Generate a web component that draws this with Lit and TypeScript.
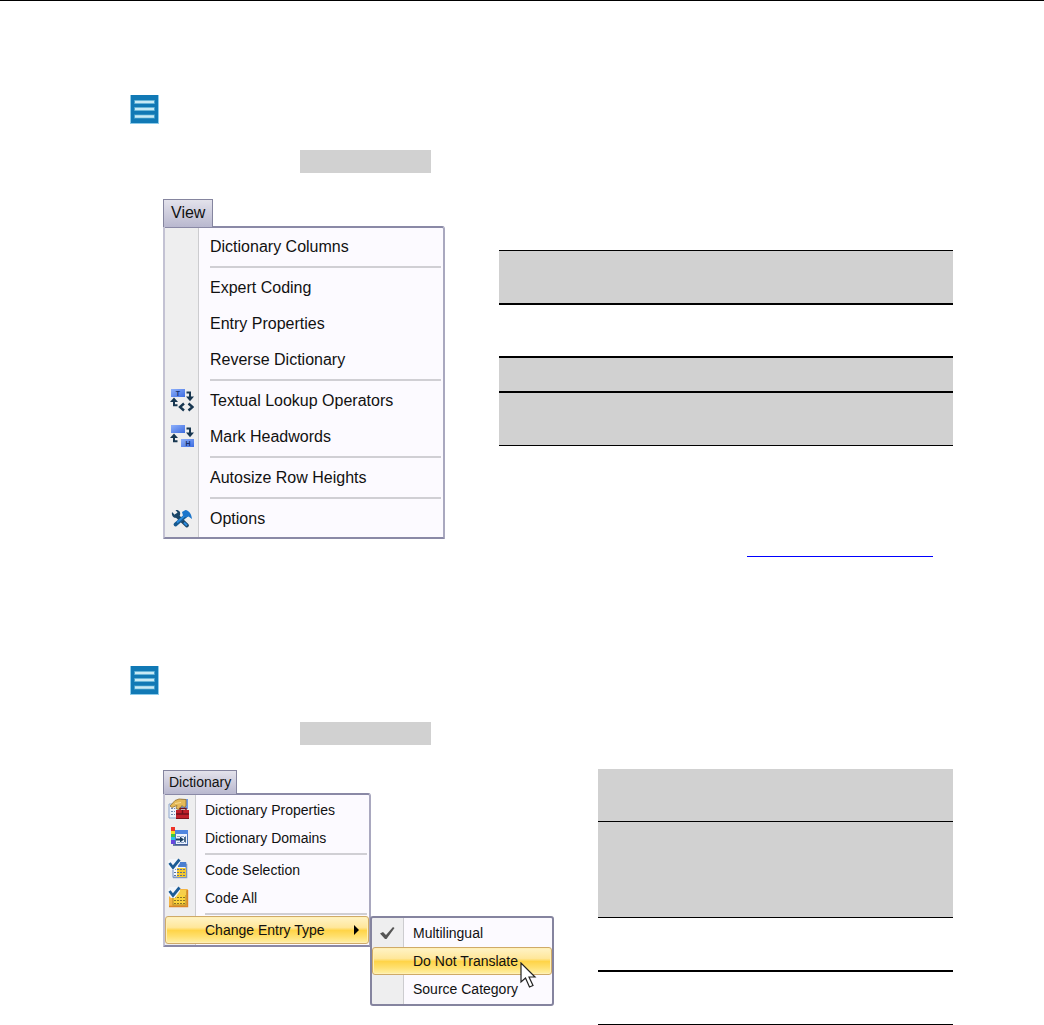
import { LitElement, html, css, svg, nothing, TemplateResult } from "lit";
import { customElement, property } from "lit/decorators.js";

type Entry = { label: string; icon?: string; active?: boolean; submenu?: boolean } | null;

const arrows = svg`
  <path d="M16.5 3.5H20V8" fill="none" stroke="#173650" stroke-width="2"/>
  <path d="M16 7.5H24L20 12.3Z" fill="#173650"/>
  <path d="M7.5 16.3H4V12" fill="none" stroke="#173650" stroke-width="2"/>
  <path d="M0 13H8L4 8.4Z" fill="#173650"/>`;

const blue = svg`
  <defs><linearGradient id="blue" x2="1" y2="1"><stop stop-color="#8eb0fb"/><stop offset="1" stop-color="#3d6ce0"/></linearGradient></defs>
  <rect x="1" y="0" width="14" height="8" fill="url(#blue)"/>`;

const sheet = (selected: boolean) => svg`
  ${selected
    ? svg`<rect x="1" y="3" width="19" height="18" rx="1" fill="#f4b545"/><path d="M1 20.5H19.5V4" fill="none" stroke="#dc8626" stroke-width="1.4"/>`
    : svg`<path d="M5 19.5H18.5V6" fill="none" stroke="#8fa0bd" stroke-width="1.6"/>`}
  <rect x="5" y="5" width="13" height="14" fill="${selected ? "#fbd43c" : "#f4f7fc"}" stroke="${selected ? "#b98b2a" : "#6f90c6"}"/>
  <rect x="10" y="4" width="8" height="5" fill="${selected ? "#f7cf4a" : "#4b7fd0"}"/>
  ${selected ? nothing : svg`<rect x="9" y="10" width="9" height="9" fill="#f5c92e"/>`}
  <path d="M6 11.5H17M6 14.5H17M6 17.5H17" stroke="${selected ? "#8a7428" : "#5d7394"}" stroke-dasharray="2 1"/>
  <path d="M2 1H12V5L7 12H3L0 9V3Z" fill="#f3f6fb"/>
  <path d="M1.5 5L5 9.5L11.5 1.5" fill="none" stroke="#1c5c96" stroke-width="2.8"/>`;

const icons: Record<string, TemplateResult<2>> = {
  lookup: svg`
    ${blue}
    <text class="glyph" x="8" y="7" text-anchor="middle">T</text>
    ${arrows}
    <path d="M14 14.5L10 18L14 21.5M18.5 14.5L22.5 18L18.5 21.5" fill="none" stroke="#173650" stroke-width="2.4"/>`,
  headword: svg`
    ${blue}
    ${arrows}
    <rect x="11" y="14" width="13" height="8" fill="url(#blue)"/>
    <text class="glyph" x="18" y="21" text-anchor="middle">H</text>`,
  tools: svg`
    <path d="M6.5 8.5L17 18.5" stroke="#1b4668" stroke-width="3.8" stroke-linecap="round"/>
    <path d="M2 5L5 8L7.5 5.5L5.5 3C9 2.5 11 5 10 8C9 11 5 11.6 3.3 10C2 8.6 1.6 7 2 5Z" fill="#1b4668"/>
    <path d="M16.5 8L5.5 17.5" stroke="#17598f" stroke-width="3.8" stroke-linecap="round"/>
    <path d="M16 7.5L7 15.5" stroke="#2a8be0" stroke-width="1.8"/>
    <path d="M12 5L15.5 3C19 3.5 21.5 7 22 12L18.5 9.5L16 10.5L13 8.5Z" fill="#1c75cb"/>
    <path d="M14 15.5L17 18.5" stroke="#2a8be0" stroke-width="2"/>`,
  properties: svg`
    <path d="M1 6H10V20H1Z" fill="#eef3fb" stroke="#8ea6cc"/>
    <path d="M3 10.5H7M3 13.5H7M3 16.5H7" stroke="#7089b0" stroke-dasharray="2 1"/>
    <rect x="13" y="1" width="7" height="10" fill="#6f9be8"/>
    <path d="M2 8L7 2.5L11 1L18 1.5V8L16 9.5L14 7.5L11 11.5L8 10.5L9 7.5L4 9.5Z" fill="#e5b957" stroke="#92702f" stroke-width=".8"/>
    <path d="M7 5.5L13 4.5" stroke="#f8dc92"/>
    <rect x="8" y="12" width="13" height="9" fill="#c01f2b"/>
    <path d="M12 12V10.5H18V12M8 16H21M14.5 12V16" fill="none" stroke="#6f111c" stroke-width="1.4"/>
    <path d="M8 20.5H21" stroke="#7c121d"/>`,
  domains: svg`
    <rect x="3" y="1" width="4" height="5" fill="#ef3328"/><rect x="3" y="5" width="4" height="3" fill="#f5dd25"/>
    <rect x="3" y="8" width="4" height="3" fill="#40c941"/><rect x="3" y="11" width="4" height="3" fill="#29bcee"/>
    <rect x="3" y="14" width="4" height="4" fill="#6747dd"/>
    <rect x="7.5" y="5.5" width="12" height="13" fill="#edf3ff" stroke="#4c78be"/>
    <rect x="7" y="4" width="13" height="4" fill="#4f86df"/>
    <path d="M5 19H20" stroke="#405987" stroke-width="1.5"/>
    <path d="M9 10.5H18M9 16.5H18" stroke="#8aa4cb" stroke-dasharray="3 1"/>
    <path d="M8 13.5H13" stroke="#183f61" stroke-width="2"/><path d="M12 10.5L16 13.5L12 16.5Z" fill="#183f61"/>
    <path d="M17 11V16" stroke="#183f61" stroke-width="1.5"/>`,
  selection: sheet(false),
  all: sheet(true),
  check: svg`<path d="M4 12.5L7 11L10 14L17 6L18.5 7L10.5 18H9Z" fill="#555"/>`,
};

@customElement("menu-list")
export class MenuList extends LitElement {
  @property({ attribute: false }) entries: Entry[] = [];
  @property() heading = "";

  static styles = css`
    :host { display: block; --row: 36px; --gap: 5px; --gutter: 33px; --size: 16px; --tab: 27px; --tab-pad: 7px; --end: 0; }
    :host([compact]) { --row: 28px; --gap: 4px; --gutter: 30px; --size: 14px; --tab: 23px; --tab-pad: 5px; --end: 1px; }
    :host([sub]) { --gutter: 31px; }
    * { box-sizing: border-box; }
    .tab, .item { font-family: "Liberation Sans", Arial, sans-serif; font-size: var(--size); color: #111; margin: 0; text-align: left; cursor: default; white-space: nowrap; }
    .tab { display: block; position: relative; height: calc(var(--tab) + 1px); margin-bottom: -1px; padding: 0 var(--tab-pad) 1px; border: solid #85859f; border-width: 1px 1px 0; background: linear-gradient(#e3e2eb, #b9b8cf); }
    .panel { border: 2px solid #8a89a6; border-left-color: #c3c2d3; border-right-color: #a9a8bf; border-radius: 0 3px 1px 1px; padding: 1px 0 var(--end);
      background: linear-gradient(90deg, #eeeeef 0 var(--gutter), #cccccf var(--gutter) calc(var(--gutter) + 1px), #fcfaff calc(var(--gutter) + 1px)); }
    :host([sub]) .panel { border-color: #85849f; border-radius: 3px; }
    .item { display: grid; grid-template-columns: var(--gutter) 1fr 12px; column-gap: 12px; align-items: center; width: 100%; height: var(--row); padding: 0 4px 0 0; border: 1px solid transparent; border-width: 1px 0; background: none; }
    :host([compact]) .item { column-gap: 10px; }
    .item.active { border: 1px solid #cfaa68; border-radius: 3px; padding-right: 3px; grid-template-columns: calc(var(--gutter) - 1px) 1fr 12px; box-shadow: inset 0 0 0 1px #fff0b5;
      background: linear-gradient(#fff3c6 0, #ffe79b 40%, #ffd448 52%, #ffe06f 75%, #fff0a8 100%); }
    .icon { width: 24px; height: 24px; justify-self: center; display: block; }
    .glyph { font: bold 7px "Liberation Sans", Arial, sans-serif; fill: #16306c; }
    .more { width: 7px; height: 12px; }
    .rule { height: var(--gap); padding: 1px 2px 0 calc(var(--gutter) + 12px); }
    :host([compact]) .rule { padding-left: calc(var(--gutter) + 10px); }
    .rule::before { content: ""; display: block; height: 2px; background: #d0cfd4; }
  `;

  render() {
    return html`
      ${this.heading ? html`<button class="tab" aria-haspopup="menu">${this.heading}</button>` : nothing}
      <div class="panel" role="menu" aria-label=${this.heading || "Change Entry Type"}>
        ${this.entries.map((e) => e
          ? html`<button class="item ${e.active ? "active" : ""}" role="menuitem">
              <svg class="icon" viewBox="0 0 24 24" aria-hidden="true">${e.icon ? icons[e.icon] : nothing}</svg>
              <span>${e.label}</span>
              ${e.submenu ? html`<svg class="more" viewBox="0 0 7 12" aria-hidden="true"><path d="M1 1L6 6L1 11Z" fill="#000"/></svg>` : nothing}
            </button>`
          : html`<div class="rule" role="separator"></div>`)}
      </div>`;
  }
}

const viewEntries: Entry[] = [
  { label: "Dictionary Columns" }, null,
  { label: "Expert Coding" }, { label: "Entry Properties" }, { label: "Reverse Dictionary" }, null,
  { label: "Textual Lookup Operators", icon: "lookup" }, { label: "Mark Headwords", icon: "headword" }, null,
  { label: "Autosize Row Heights" }, null,
  { label: "Options", icon: "tools" },
];
const dictionaryEntries: Entry[] = [
  { label: "Dictionary Properties", icon: "properties" }, { label: "Dictionary Domains", icon: "domains" }, null,
  { label: "Code Selection", icon: "selection" }, { label: "Code All", icon: "all" }, null,
  { label: "Change Entry Type", active: true, submenu: true },
];
const typeEntries: Entry[] = [
  { label: "Multilingual", icon: "check" }, { label: "Do Not Translate", active: true }, { label: "Source Category" },
];

@customElement("app-root")
export class AppRoot extends LitElement {
  static styles = css`
    :host { display: block; background: #fff; font-family: "Liberation Sans", Arial, sans-serif; }
    * { box-sizing: border-box; }
    .page { border-top: 1px solid #000; padding: 94px 91px 0 130px; }
    .badge { display: block; width: 29px; height: 29px; }
    .mark { width: 131px; height: 23px; margin: 26px 0 0 170px; background: #d1d1d1; }
    .section .mark { margin-top: 27px; }
    .row { display: flex; align-items: flex-start; padding-left: 33px; }
    .first { margin-top: 26px; gap: 54px; }
    .second { margin-top: 24px; gap: 45px; }
    .view { flex: 0 0 282px; }
    .side { flex: 1; display: flex; flex-direction: column; }
    .side .grid { margin-top: 51px; }
    .grid { flex: 1; }
    .band { border: 0 solid #000; border-bottom-width: 1px; height: 53px; }
    .shade { background: #d1d1d1; }
    .top { border-top-width: 1px; height: 55px; }
    .thick { border-bottom-width: 2px; }
    .short { height: 35px; }
    .medium { height: 54px; }
    .tall { height: 96px; }
    .link { display: block; width: 186px; height: 20px; margin: 91px 20px 0 0; align-self: flex-end; border-bottom: 1px solid #00f; }
    .section { margin-top: 109px; }
    .figure { position: relative; flex: 0 0 390px; padding-top: 1px; }
    .dictionary { width: 208px; }
    .types { position: absolute; left: 207px; top: 147px; width: 184px; }
    .pointer { position: absolute; left: 357px; top: 193px; width: 17px; height: 28px; }
  `;

  private badge() {
    return html`<svg class="badge" viewBox="0 0 29 29" role="img" aria-label="Menu">
      <rect width="29" height="29" fill="#8dcbea"/><rect x="1" width="27" height="28" fill="#1179b5"/>
      <path d="M4 7H25M4 14H25M4 21.5H25" stroke="#4aa3cd" stroke-width="4"/>
      <path d="M5 7H24M5 14H24M5 21.5H24" stroke="#c8eaf5" stroke-width="2.6"/>
    </svg>`;
  }

  render() {
    return html`<main class="page">
      <section>
        ${this.badge()}
        <div class="mark"></div>
        <div class="row first">
          <menu-list class="view" heading="View" .entries=${viewEntries}></menu-list>
          <div class="side">
            <div class="grid">
              <div class="band shade top thick"></div>
              <div class="band thick"></div>
              <div class="band shade thick short"></div>
              <div class="band shade"></div>
            </div>
            <a class="link" href="#dictionary" aria-label="Dictionary menu"></a>
          </div>
        </div>
      </section>
      <section class="section" id="dictionary">
        ${this.badge()}
        <div class="mark"></div>
        <div class="row second">
          <div class="figure">
            <menu-list class="dictionary" compact heading="Dictionary" .entries=${dictionaryEntries}></menu-list>
            <menu-list class="types" compact sub .entries=${typeEntries}></menu-list>
            <svg class="pointer" viewBox="0 0 17 28" aria-hidden="true">
              <path d="M1 1V20L5.5 16L9.5 25L13 23.5L9 15H15Z" fill="#fff" stroke="#222" stroke-width="1.2"/>
            </svg>
          </div>
          <div class="grid">
            <div class="band shade"></div>
            <div class="band shade tall"></div>
            <div class="band thick medium"></div>
            <div class="band"></div>
          </div>
        </div>
      </section>
    </main>`;
  }
}
